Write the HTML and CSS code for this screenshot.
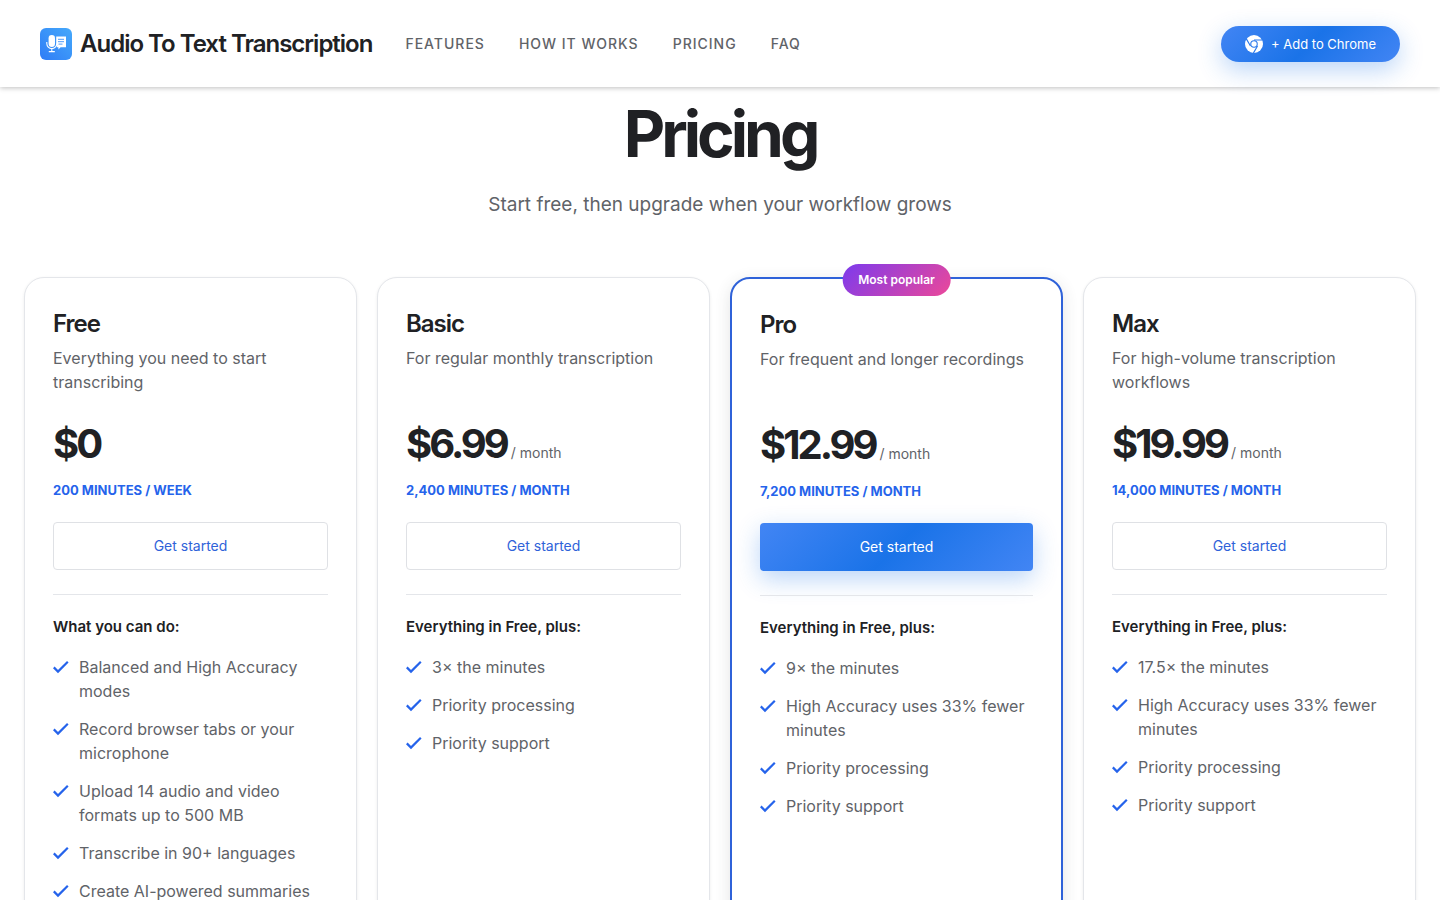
FILE: index.html
```html
<!DOCTYPE html>
<html lang="en">
<head>
  <meta charset="UTF-8">
  <meta name="viewport" content="width=device-width, initial-scale=1">
  <title>Audio To Text Transcription - Pricing</title>
  <link rel="stylesheet" href="styles.css">
</head>
<body>
  <svg class="sprite" width="0" height="0" aria-hidden="true">
    <symbol id="check" viewBox="0 0 16 16">
      <path d="M.8 8.4l4.2 4.2L14.8 2.8" fill="none" stroke="currentColor" stroke-width="2.2"/>
    </symbol>
  </svg>

  <header class="header">
    <a class="brand" href="#">
      <svg class="brand-logo" viewBox="0 0 32 32" aria-hidden="true">
        <defs>
          <linearGradient id="logo-bg" x1="1" y1="0" x2="0" y2="1">
            <stop offset="0" stop-color="#45a9fb"/>
            <stop offset="1" stop-color="#2f7cf6"/>
          </linearGradient>
        </defs>
        <rect width="32" height="32" rx="6" fill="url(#logo-bg)"/>
        <rect x="8.6" y="7" width="6.4" height="12" rx="3.2" fill="#fff"/>
        <path d="M6.8 14v1.6a5 5 0 0 0 10 0M11.8 20.5V23.5M8.8 23.6h6" fill="none" stroke="#fff" stroke-width="1.1"/>
        <path d="M16.2 8.6h9.8v10.6h-5.4l-2.2 2.4v-2.4h-1.6l.4-2-1-1z" fill="#fff"/>
        <path d="M18 11.3h6M18 13.7h6M18.5 16.1h4" stroke="#3b90f8" stroke-width=".9"/>
      </svg>
      <span>Audio To Text Transcription</span>
    </a>
    <nav class="nav">
      <a href="#features">Features</a>
      <a href="#how">How it works</a>
      <a href="#pricing">Pricing</a>
      <a href="#faq">FAQ</a>
    </nav>
    <a class="chrome-btn" href="#install">
      <svg viewBox="0 0 24 24" aria-hidden="true">
        <circle cx="12" cy="12" r="12" fill="#fff"/>
        <circle cx="12" cy="12" r="5" fill="#2a78ec" stroke="none"/>
        <circle cx="12" cy="12" r="3.6" fill="#fff"/>
        <path d="M12 6.6h11M7.3 14.7L1.8 5.2M16.7 14.7l-5.5 9.5" fill="none" stroke="#2a78ec" stroke-width="1.5"/>
      </svg>
      <span>+ Add to Chrome</span>
    </a>
  </header>

  <main class="pricing" id="pricing">
    <h1>Pricing</h1>
    <p class="subtitle">Start free, then upgrade when your workflow grows</p>

    <div class="plans">
      <section class="plan">
        <h2>Free</h2>
        <p class="desc">Everything you need to start transcribing</p>
        <p class="price"><strong>$0</strong></p>
        <p class="minutes">200 minutes / week</p>
        <button class="btn" type="button">Get started</button>
        <div class="features">
          <h3>What you can do:</h3>
          <ul>
            <li><svg><use href="#check"/></svg><span>Balanced and High Accuracy modes</span></li>
            <li><svg><use href="#check"/></svg><span>Record browser tabs or your microphone</span></li>
            <li><svg><use href="#check"/></svg><span>Upload 14 audio and video formats up to 500 MB</span></li>
            <li><svg><use href="#check"/></svg><span>Transcribe in 90+ languages</span></li>
            <li><svg><use href="#check"/></svg><span>Create AI-powered summaries</span></li>
          </ul>
        </div>
      </section>

      <section class="plan">
        <h2>Basic</h2>
        <p class="desc">For regular monthly transcription</p>
        <p class="price"><strong>$6.99</strong><span>/ month</span></p>
        <p class="minutes">2,400 minutes / month</p>
        <button class="btn" type="button">Get started</button>
        <div class="features">
          <h3>Everything in Free, plus:</h3>
          <ul>
            <li><svg><use href="#check"/></svg><span>3× the minutes</span></li>
            <li><svg><use href="#check"/></svg><span>Priority processing</span></li>
            <li><svg><use href="#check"/></svg><span>Priority support</span></li>
          </ul>
        </div>
      </section>

      <section class="plan popular">
        <span class="badge">Most popular</span>
        <h2>Pro</h2>
        <p class="desc">For frequent and longer recordings</p>
        <p class="price"><strong>$12.99</strong><span>/ month</span></p>
        <p class="minutes">7,200 minutes / month</p>
        <button class="btn btn-primary" type="button">Get started</button>
        <div class="features">
          <h3>Everything in Free, plus:</h3>
          <ul>
            <li><svg><use href="#check"/></svg><span>9× the minutes</span></li>
            <li><svg><use href="#check"/></svg><span>High Accuracy uses 33% fewer minutes</span></li>
            <li><svg><use href="#check"/></svg><span>Priority processing</span></li>
            <li><svg><use href="#check"/></svg><span>Priority support</span></li>
          </ul>
        </div>
      </section>

      <section class="plan">
        <h2>Max</h2>
        <p class="desc">For high-volume transcription workflows</p>
        <p class="price"><strong>$19.99</strong><span>/ month</span></p>
        <p class="minutes">14,000 minutes / month</p>
        <button class="btn" type="button">Get started</button>
        <div class="features">
          <h3>Everything in Free, plus:</h3>
          <ul>
            <li><svg><use href="#check"/></svg><span>17.5× the minutes</span></li>
            <li><svg><use href="#check"/></svg><span>High Accuracy uses 33% fewer minutes</span></li>
            <li><svg><use href="#check"/></svg><span>Priority processing</span></li>
            <li><svg><use href="#check"/></svg><span>Priority support</span></li>
          </ul>
        </div>
      </section>
    </div>
  </main>
</body>
</html>
```
FILE: styles.css
```css
* { box-sizing: border-box; }
html { scrollbar-width: none; }
body { margin: 0; font-family: Inter, "Liberation Sans", sans-serif; font-size: 16px; line-height: 24px; background: #fff; color: #202124; }
h1, h2, h3, p, ul { margin: 0; padding: 0; }
a { color: inherit; text-decoration: none; }
.sprite { position: absolute; }

.header { position: sticky; top: 0; z-index: 10; display: flex; align-items: center; padding: 26px 40px 25px; background: #fff; box-shadow: 0 1px 5px rgba(0, 0, 0, .25); }
.brand { display: flex; align-items: center; gap: 8px; font-size: 24px; line-height: 32px; font-weight: 600; letter-spacing: -1px; white-space: nowrap; }
.brand-logo { width: 32px; height: 32px; }
.nav { display: flex; gap: 34px; margin-left: 33px; font-size: 14px; font-weight: 500; letter-spacing: 1px; text-transform: uppercase; color: #5f6368; white-space: nowrap; }
.chrome-btn { display: flex; align-items: center; gap: 8px; height: 36px; margin-left: auto; padding: 0 24px; border-radius: 18px; font-size: 13px; color: #fff; white-space: nowrap; background: linear-gradient(135deg, #4285f4, #1a73e8 50%, #4285f4); box-shadow: 0 8px 24px rgba(26, 115, 232, .3); }
.chrome-btn svg { width: 18px; height: 18px; }

.pricing { padding: 10px 24px 60px; }
h1 { font-size: 64px; line-height: 74px; font-weight: 700; letter-spacing: -4px; text-align: center; }
.subtitle { margin-top: 20px; font-size: 19px; line-height: 28px; color: #5f6368; text-align: center; }

.plans { display: grid; grid-template-columns: repeat(4, 1fr); gap: 20px; margin-top: 58px; }
.plan { position: relative; padding: 28px; border: 1px solid #e4e6ea; border-radius: 20px; background: #fff; box-shadow: 0 1px 3px rgba(60, 64, 67, .1); }
.popular { border: 2px solid #2f62d9; box-shadow: 0 4px 16px rgba(60, 64, 67, .14); }
.badge { position: absolute; top: -15px; left: 50%; transform: translateX(-50%); padding: 4px 16px; border-radius: 16px; font-size: 12px; font-weight: 600; color: #fff; white-space: nowrap; background: linear-gradient(135deg, #7c3aed, #ec4899); }
.plan h2 { font-size: 24px; line-height: 36px; font-weight: 600; letter-spacing: -1px; }
.desc { min-height: 48px; margin-top: 4px; color: #5f6368; }
.price { display: flex; align-items: baseline; gap: 4px; height: 52px; margin-top: 24px; line-height: 52px; }
.price strong { font-size: 40px; font-weight: 700; letter-spacing: -3px; }
.price span { font-size: 14px; color: #5f6368; }
.minutes { margin: 8px 0 20px; font-size: 13px; font-weight: 700; text-transform: uppercase; color: #2563eb; }
.btn { display: block; width: 100%; height: 48px; border: 1px solid #dfe1e5; border-radius: 4px; font: inherit; font-size: 14px; color: #2f62d9; background: #fff; cursor: pointer; }
.btn-primary { border: 0; color: #fff; background: linear-gradient(135deg, #4285f4, #1a73e8 50%, #4285f4); box-shadow: 0 8px 24px rgba(26, 115, 232, .3); }
.features { margin-top: 24px; padding-top: 20px; border-top: 1px solid #e4e6ea; }
.features h3 { font-size: 15px; line-height: 24px; font-weight: 600; }
.features ul { display: grid; gap: 14px; margin-top: 16px; list-style: none; color: #5f6368; }
.features li { display: flex; gap: 10px; }
.features li svg { flex: none; width: 16px; height: 16px; margin-top: 4px; color: #2563eb; }
```
